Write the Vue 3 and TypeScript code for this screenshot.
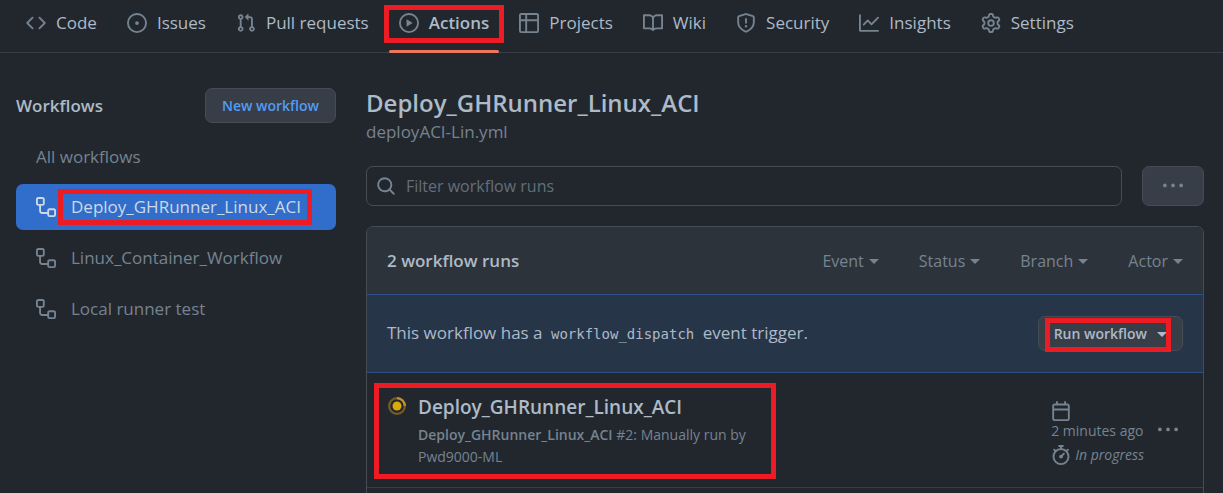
<script setup lang="ts">
interface NavItem { label: string; icon: string; active?: boolean }
interface Workflow { name: string; active?: boolean }

const icons: Record<string, string> = {
  code: 'M4.72 3.22a.75.75 0 011.06 1.06L2.06 8l3.72 3.72a.75.75 0 11-1.06 1.06L.47 8.53a.75.75 0 010-1.06l4.25-4.25zm6.56 0a.75.75 0 10-1.06 1.06L13.94 8l-3.72 3.72a.75.75 0 101.06 1.06l4.25-4.25a.75.75 0 000-1.06l-4.25-4.25z',
  issue: 'M8 9.5a1.5 1.5 0 100-3 1.5 1.5 0 000 3zM8 0a8 8 0 100 16A8 8 0 008 0zM1.5 8a6.5 6.5 0 1113 0 6.5 6.5 0 01-13 0z',
  pull: 'M7.177 3.073L9.573.677A.25.25 0 0110 .854v4.792a.25.25 0 01-.427.177L7.177 3.427a.25.25 0 010-.354zM3.75 2.5a.75.75 0 100 1.5.75.75 0 000-1.5zm-2.25.75a2.25 2.25 0 113 2.122v5.256a2.251 2.251 0 11-1.5 0V5.372A2.25 2.25 0 011.5 3.25zM11 2.5h-1V4h1a1 1 0 011 1v5.628a2.251 2.251 0 101.5 0V5A2.5 2.5 0 0011 2.5zm1 10.25a.75.75 0 111.5 0 .75.75 0 01-1.5 0zM3.75 12a.75.75 0 100 1.5.75.75 0 000-1.5z',
  play: 'M1.5 8a6.5 6.5 0 1113 0 6.5 6.5 0 01-13 0zM8 0a8 8 0 100 16A8 8 0 008 0zM6.379 5.227A.25.25 0 006 5.442v5.117a.25.25 0 00.379.214l4.264-2.559a.25.25 0 000-.428L6.379 5.227z',
  table: 'M0 1.75C0 .784.784 0 1.75 0h12.5C15.216 0 16 .784 16 1.75v12.5A1.75 1.75 0 0114.25 16H1.75A1.75 1.75 0 010 14.25V1.75zM1.5 6.5v7.75c0 .138.112.25.25.25H5v-8H1.5zM5 5H1.5V1.75a.25.25 0 01.25-.25H5V5zm1.5 1.5v8h7.75a.25.25 0 00.25-.25V6.5h-8zm8-1.5h-8V1.5h7.75a.25.25 0 01.25.25V5z',
  book: 'M0 1.75A.75.75 0 01.75 1h4.253c1.227 0 2.317.59 3 1.501A3.744 3.744 0 0111.006 1h4.245a.75.75 0 01.75.75v10.5a.75.75 0 01-.75.75h-4.507a2.25 2.25 0 00-1.591.659l-.622.621a.75.75 0 01-1.06 0l-.622-.621A2.25 2.25 0 005.258 13H.75a.75.75 0 01-.75-.75V1.75zm8.755 3a2.25 2.25 0 012.25-2.25H14.5v9h-3.757c-.71 0-1.4.201-1.992.572l.004-7.322zm-1.504 7.324l.004-5.073-.002-2.253A2.25 2.25 0 005.003 2.5H1.5v9h3.757a3.75 3.75 0 011.994.574z',
  shield: 'M7.467.133a1.75 1.75 0 011.066 0l5.25 1.68A1.75 1.75 0 0115 3.48V7c0 1.566-.32 3.182-1.303 4.682-.983 1.498-2.585 2.813-5.032 3.855a1.7 1.7 0 01-1.33 0c-2.447-1.042-4.049-2.357-5.032-3.855C1.32 10.182 1 8.566 1 7V3.48a1.75 1.75 0 011.217-1.667l5.25-1.68zm.61 1.429a.25.25 0 00-.153 0l-5.25 1.68a.25.25 0 00-.174.238V7c0 1.358.275 2.666 1.057 3.86.784 1.194 2.121 2.34 4.366 3.297a.2.2 0 00.154 0c2.245-.956 3.582-2.104 4.366-3.298C13.225 9.666 13.5 8.36 13.5 7V3.48a.25.25 0 00-.174-.237l-5.25-1.68zM9 10.5a1 1 0 11-2 0 1 1 0 012 0zm-.25-5.75a.75.75 0 10-1.5 0v3a.75.75 0 001.5 0v-3z',
  graph: 'M1.5 1.75a.75.75 0 00-1.5 0v12.5c0 .414.336.75.75.75h14.5a.75.75 0 000-1.5H1.5V1.75zm14.28 2.53a.75.75 0 00-1.06-1.06L10 7.94 7.53 5.47a.75.75 0 00-1.06 0L3.22 8.72a.75.75 0 001.06 1.06L7 7.06l2.47 2.47a.75.75 0 001.06 0l5.25-5.25z',
  gear: 'M7.429 1.525a6.593 6.593 0 011.142 0c.036.003.108.036.137.146l.289 1.105c.147.56.55.967.997 1.189.174.086.341.183.501.29.417.278.97.423 1.53.27l1.102-.303c.11-.03.175.016.195.046.219.31.41.641.573.989.014.031.022.11-.059.19l-.815.806c-.411.406-.562.957-.53 1.456a4.588 4.588 0 010 .582c-.032.499.119 1.05.53 1.456l.815.806c.08.08.073.159.059.19a6.494 6.494 0 01-.573.99c-.02.029-.086.074-.195.045l-1.103-.303c-.559-.153-1.112-.008-1.529.27-.16.107-.327.204-.5.29-.449.222-.851.628-.998 1.189l-.289 1.105c-.029.11-.101.143-.137.146a6.613 6.613 0 01-1.142 0c-.036-.003-.108-.037-.137-.146l-.289-1.105c-.147-.56-.55-.967-.997-1.189a4.502 4.502 0 01-.501-.29c-.417-.278-.97-.423-1.53-.27l-1.102.303c-.11.03-.175-.016-.195-.046a6.492 6.492 0 01-.573-.989c-.014-.031-.022-.11.059-.19l.815-.806c.411-.406.562-.957.53-1.456a4.587 4.587 0 010-.582c.032-.499-.119-1.05-.53-1.456l-.815-.806c-.08-.08-.073-.159-.059-.19a6.44 6.44 0 01.573-.99c.02-.029.086-.075.195-.045l1.103.303c.559.153 1.112.008 1.529-.27.16-.107.327-.204.5-.29.449-.222.851-.628.998-1.189l.289-1.105c.029-.11.101-.143.137-.146zM8 0c-.236 0-.47.01-.701.03-.743.065-1.29.615-1.458 1.261l-.29 1.106c-.017.066-.078.158-.211.224a5.994 5.994 0 00-.668.386c-.123.082-.233.09-.3.071L3.27 2.776c-.644-.177-1.392.02-1.82.63a7.977 7.977 0 00-.704 1.217c-.315.675-.111 1.422.363 1.891l.815.806c.05.048.098.147.088.294a6.084 6.084 0 000 .772c.01.147-.038.246-.088.294l-.815.806c-.474.469-.678 1.216-.363 1.891.2.428.436.835.704 1.218.428.609 1.176.806 1.82.63l1.103-.303c.066-.019.176-.011.299.071.213.143.436.272.668.386.133.066.194.158.212.224l.289 1.106c.169.646.715 1.196 1.458 1.26a8.094 8.094 0 001.402 0c.743-.064 1.29-.614 1.458-1.26l.29-1.106c.017-.066.078-.158.211-.224a5.98 5.98 0 00.668-.386c.123-.082.233-.09.3-.071l1.102.302c.644.177 1.392-.02 1.82-.63.268-.382.505-.789.704-1.217.315-.675.111-1.422-.364-1.891l-.814-.806c-.05-.048-.098-.147-.088-.294a6.1 6.1 0 000-.772c-.01-.147.039-.246.088-.294l.814-.806c.475-.469.679-1.216.364-1.891a7.992 7.992 0 00-.704-1.218c-.428-.609-1.176-.806-1.82-.63l-1.103.303c-.066.019-.176.011-.299-.071a5.991 5.991 0 00-.668-.386c-.133-.066-.194-.158-.212-.224L10.16 1.29C9.99.645 9.444.095 8.701.031A8.094 8.094 0 008 0zm1.5 8a1.5 1.5 0 11-3 0 1.5 1.5 0 013 0zM11 8a3 3 0 11-6 0 3 3 0 016 0z',
  workflow: 'M0 1.75C0 .784.784 0 1.75 0h3.5C6.216 0 7 .784 7 1.75v3.5A1.75 1.75 0 015.25 7H4v4a1 1 0 001 1h4v-1.25C9 9.784 9.784 9 10.75 9h3.5c.966 0 1.75.784 1.75 1.75v3.5A1.75 1.75 0 0114.25 16h-3.5A1.75 1.75 0 019 14.25v-.75H5A2.5 2.5 0 012.5 11V7h-.75A1.75 1.75 0 010 5.25v-3.5zm1.75-.25a.25.25 0 00-.25.25v3.5c0 .138.112.25.25.25h3.5a.25.25 0 00.25-.25v-3.5a.25.25 0 00-.25-.25h-3.5zm9 9a.25.25 0 00-.25.25v3.5c0 .138.112.25.25.25h3.5a.25.25 0 00.25-.25v-3.5a.25.25 0 00-.25-.25h-3.5z',
  search: 'M11.5 7a4.499 4.499 0 11-8.998 0A4.499 4.499 0 0111.5 7zm-.82 4.74a6 6 0 111.06-1.06l3.04 3.04a.75.75 0 11-1.06 1.06l-3.04-3.04z',
  kebab: 'M8 9a1.5 1.5 0 100-3 1.5 1.5 0 000 3zM1.5 9a1.5 1.5 0 100-3 1.5 1.5 0 000 3zm13 0a1.5 1.5 0 100-3 1.5 1.5 0 000 3z',
  calendar: 'M4.75 0a.75.75 0 01.75.75V2h5V.75a.75.75 0 011.5 0V2h1.25c.966 0 1.75.784 1.75 1.75v10.5A1.75 1.75 0 0113.25 16H2.75A1.75 1.75 0 011 14.25V3.75C1 2.784 1.784 2 2.75 2H4V.75A.75.75 0 014.75 0zm0 3.5h8.5a.25.25 0 01.25.25V6h-11V3.75a.25.25 0 01.25-.25h2zm-2.25 4v6.75c0 .138.112.25.25.25h10.5a.25.25 0 00.25-.25V7.5h-11z',
  stopwatch: 'M5.75.75A.75.75 0 016.5 0h3a.75.75 0 010 1.5h-.75v1l-.001.041a6.718 6.718 0 013.464 1.435l.007-.006.75-.75a.75.75 0 111.06 1.06l-.75.75-.006.007a6.75 6.75 0 11-10.548 0L2.72 5.03l-.75-.75a.75.75 0 011.06-1.06l.75.75.007.006A6.718 6.718 0 017.25 2.541a.756.756 0 010-.041v-1H6.5a.75.75 0 01-.75-.75zM8 14.5A5.25 5.25 0 108 4a5.25 5.25 0 000 10.5zm.389-6.7l1.33-1.33a.75.75 0 111.061 1.06L9.45 8.861A1.502 1.502 0 018 10.75a1.5 1.5 0 11.389-2.95z',
}

const nav: NavItem[] = [
  { label: 'Code', icon: 'code' },
  { label: 'Issues', icon: 'issue' },
  { label: 'Pull requests', icon: 'pull' },
  { label: 'Actions', icon: 'play', active: true },
  { label: 'Projects', icon: 'table' },
  { label: 'Wiki', icon: 'book' },
  { label: 'Security', icon: 'shield' },
  { label: 'Insights', icon: 'graph' },
  { label: 'Settings', icon: 'gear' },
]

const workflows: Workflow[] = [
  { name: 'Deploy_GHRunner_Linux_ACI', active: true },
  { name: 'Linux_Container_Workflow' },
  { name: 'Local runner test' },
]

const filters = ['Event', 'Status', 'Branch', 'Actor']
</script>

<template>
  <div class="page">
    <nav class="repo-nav" aria-label="Repository">
      <a v-for="item in nav" :key="item.label" href="#" class="tab" :class="{ active: item.active }">
        <svg class="icon" viewBox="0 0 16 16" aria-hidden="true"><path fill-rule="evenodd" :d="icons[item.icon]" /></svg>
        <span>{{ item.label }}</span>
        <span v-if="item.active" class="mark mark-tab"></span>
      </a>
    </nav>

    <div class="layout">
      <aside class="sidebar">
        <div class="side-head">
          <h2>Workflows</h2>
          <button type="button" class="btn btn-new">New workflow</button>
        </div>
        <a href="#" class="side-link all">All workflows</a>
        <a v-for="w in workflows" :key="w.name" href="#" class="side-link" :class="{ selected: w.active }">
          <svg class="icon" viewBox="0 0 16 16" aria-hidden="true"><path fill-rule="evenodd" :d="icons.workflow" /></svg>
          <span class="side-name">{{ w.name }}<span v-if="w.active" class="mark mark-side"></span></span>
        </a>
      </aside>

      <main class="main">
        <h1>Deploy_GHRunner_Linux_ACI</h1>
        <a href="#" class="file">deployACI-Lin.yml</a>

        <div class="filter-row">
          <label class="search">
            <svg class="icon" viewBox="0 0 16 16" aria-hidden="true"><path fill-rule="evenodd" :d="icons.search" /></svg>
            <input type="text" placeholder="Filter workflow runs" aria-label="Filter workflow runs" />
          </label>
          <button type="button" class="btn btn-more" aria-label="More options">
            <svg class="icon" viewBox="0 0 16 16" aria-hidden="true"><path :d="icons.kebab" /></svg>
          </button>
        </div>

        <section class="runs">
          <header class="runs-head">
            <strong>2 workflow runs</strong>
            <div class="filters">
              <button v-for="f in filters" :key="f" type="button" class="filter">{{ f }}<i class="caret"></i></button>
            </div>
          </header>

          <div class="dispatch">
            <p>This workflow has a <code>workflow_dispatch</code> event trigger.</p>
            <button type="button" class="btn btn-run">Run workflow<i class="caret"></i><span class="mark mark-run"></span></button>
          </div>

          <article class="run">
            <div class="run-info">
              <svg class="status" viewBox="0 0 16 16" role="img" aria-label="In progress">
                <circle cx="8" cy="8" r="7" fill="none" stroke="#c69026" stroke-opacity="0.5" stroke-width="2" />
                <path d="M8 1a7 7 0 0 1 7 7" fill="none" stroke="#c69026" stroke-width="2" />
                <circle cx="8" cy="8" r="4" fill="#daaa0b" />
              </svg>
              <div class="run-text">
                <a href="#" class="run-title">Deploy_GHRunner_Linux_ACI</a>
                <p class="run-sub"><b>Deploy_GHRunner_Linux_ACI</b> #2: Manually run by <a href="#">Pwd9000-ML</a></p>
              </div>
              <span class="mark mark-info"></span>
            </div>
            <div class="run-meta">
              <div class="meta-line stacked">
                <svg class="icon" viewBox="0 0 16 16" aria-hidden="true"><path fill-rule="evenodd" :d="icons.calendar" /></svg>
                <time>2 minutes ago</time>
              </div>
              <div class="meta-line">
                <svg class="icon" viewBox="0 0 16 16" aria-hidden="true"><path fill-rule="evenodd" :d="icons.stopwatch" /></svg>
                <em>In progress</em>
              </div>
            </div>
            <button type="button" class="run-more" aria-label="Run options">
              <svg class="icon" viewBox="0 0 16 16" aria-hidden="true"><path :d="icons.kebab" /></svg>
            </button>
          </article>
        </section>
      </main>
    </div>
  </div>
</template>

<style>
html,
body {
  background: #22272e;
  overflow: hidden;
}
</style>

<style scoped>
.page,
.page * {
  box-sizing: border-box;
}
.page {
  color: #adbac7;
  font-family: "Open Sans", "Noto Sans", sans-serif;
  font-size: 17px;
  line-height: 26px;
}
.page a {
  color: inherit;
  text-decoration: none;
}
.page button,
.page input {
  font-family: inherit;
  color: inherit;
}
.icon {
  display: block;
  flex: none;
  width: 20px;
  height: 20px;
  fill: #768390;
}
h1,
h2,
p {
  margin: 0;
}
.mark {
  position: absolute;
  border: 5px solid #ed1c24;
  pointer-events: none;
}

.repo-nav {
  display: flex;
  gap: 10px;
  padding: 0 16px;
  border-bottom: 1px solid #373e47;
}
.tab {
  position: relative;
  display: flex;
  align-items: center;
  gap: 10px;
  height: 52px;
  padding: 0 10px 6px;
  white-space: nowrap;
}
.tab.active {
  font-weight: 600;
}
.tab.active::after {
  content: "";
  position: absolute;
  left: 0;
  right: 0;
  bottom: -1px;
  height: 3px;
  border-radius: 2px;
  background: #ec775c;
}
.mark-tab {
  inset: 5px -5px 9px;
}

.layout {
  display: grid;
  grid-template-columns: 320px minmax(0, 1fr);
  gap: 30px;
  padding: 35px 19px 0 16px;
}
.side-head {
  display: flex;
  align-items: center;
  justify-content: space-between;
  margin-bottom: 11px;
}
h2 {
  font-size: 17px;
  font-weight: 600;
}
.btn {
  border: 1px solid #444c56;
  border-radius: 7px;
  background: #373e47;
  font-size: 14px;
  font-weight: 600;
  line-height: 24px;
}
.page .btn-new {
  height: 35px;
  padding: 0 16px;
  color: #539bf5;
}
.side-link {
  display: flex;
  align-items: center;
  gap: 15px;
  height: 46px;
  margin-bottom: 5px;
  padding: 0 20px;
  border-radius: 7px;
}
.page .side-link {
  color: #768390;
}
.side-link.all {
  height: 45px;
}
.page .selected {
  background: #316dca;
  color: #cdd9e5;
}
.selected .icon {
  fill: #cdd9e5;
}
.side-name {
  position: relative;
}
.mark-side {
  inset: -5px -11px -5px -13px;
}

h1 {
  font-size: 24px;
  font-weight: 600;
  line-height: 30px;
}
.file {
  display: block;
  line-height: 28px;
}
.page .file {
  color: #768390;
}
.filter-row {
  display: flex;
  gap: 20px;
  margin: 20px 0;
}
.search {
  display: flex;
  flex: 1;
  align-items: center;
  gap: 10px;
  height: 40px;
  padding: 0 9px;
  border: 1px solid #444c56;
  border-radius: 7px;
}
.search input {
  flex: 1;
  min-width: 0;
  padding: 0;
  border: 0;
  outline: 0;
  background: transparent;
  font-size: 16px;
}
.search input::placeholder {
  color: #636e7b;
  opacity: 1;
}
.btn-more {
  display: grid;
  place-items: center;
  width: 62px;
  height: 40px;
}

.runs {
  padding-bottom: 20px;
  border: 1px solid #444c56;
  border-radius: 7px 7px 0 0;
}
.runs-head {
  display: flex;
  align-items: center;
  justify-content: space-between;
  height: 67px;
  padding: 0 20px;
  border-radius: 6px 6px 0 0;
  background: #2d333b;
}
.runs-head strong {
  font-weight: 600;
}
.filters {
  display: flex;
  gap: 40px;
}
.filter {
  display: flex;
  align-items: center;
  gap: 5px;
  padding: 0;
  border: 0;
  background: transparent;
  font-size: 16px;
  line-height: 26px;
}
.page .filter {
  color: #768390;
}
.caret {
  margin-top: 2px;
  border: 5px solid transparent;
  border-top-color: currentColor;
  border-bottom: 0;
}
.dispatch {
  display: flex;
  align-items: center;
  justify-content: space-between;
  height: 79px;
  padding: 0 20px;
  border-top: 1px solid #2b5187;
  border-bottom: 1px solid #2b5187;
  background: #273549;
}
code {
  padding: 0 4px;
  font-family: "DejaVu Sans Mono", monospace;
  font-size: 14px;
}
.btn-run {
  position: relative;
  display: flex;
  align-items: center;
  gap: 10px;
  height: 35px;
  padding: 0 15px;
}
.mark-run {
  inset: 1px 11px -2px 6px;
}

.run {
  display: grid;
  grid-template-columns: minmax(0, 402px) minmax(0, 1fr) 20px;
  align-items: start;
  padding: 10px 25px 8px 7px;
  border-bottom: 1px solid #373e47;
}
.run-info {
  position: relative;
  display: flex;
  gap: 12px;
  padding: 11px 20px 11px 14px;
}
.status {
  flex: none;
  width: 18px;
  height: 18px;
  margin-top: 3px;
}
.run-title {
  display: block;
  margin-bottom: 4px;
  font-size: 19px;
  font-weight: 600;
}
.run-sub {
  color: #768390;
  font-size: 14px;
  line-height: 22px;
}
.run-sub b {
  font-weight: 600;
}
.mark-info {
  inset: 0;
}
.run-meta {
  justify-self: end;
  margin-right: 14px;
  padding-top: 18px;
  color: #768390;
  font-size: 14px;
  line-height: 20px;
}
.meta-line {
  display: flex;
  align-items: center;
  gap: 4px;
  margin-bottom: 4px;
}
.stacked {
  flex-direction: column;
  align-items: flex-start;
  gap: 0;
}
.run-more {
  margin-top: 37px;
  padding: 0;
  border: 0;
  background: transparent;
}
</style>
